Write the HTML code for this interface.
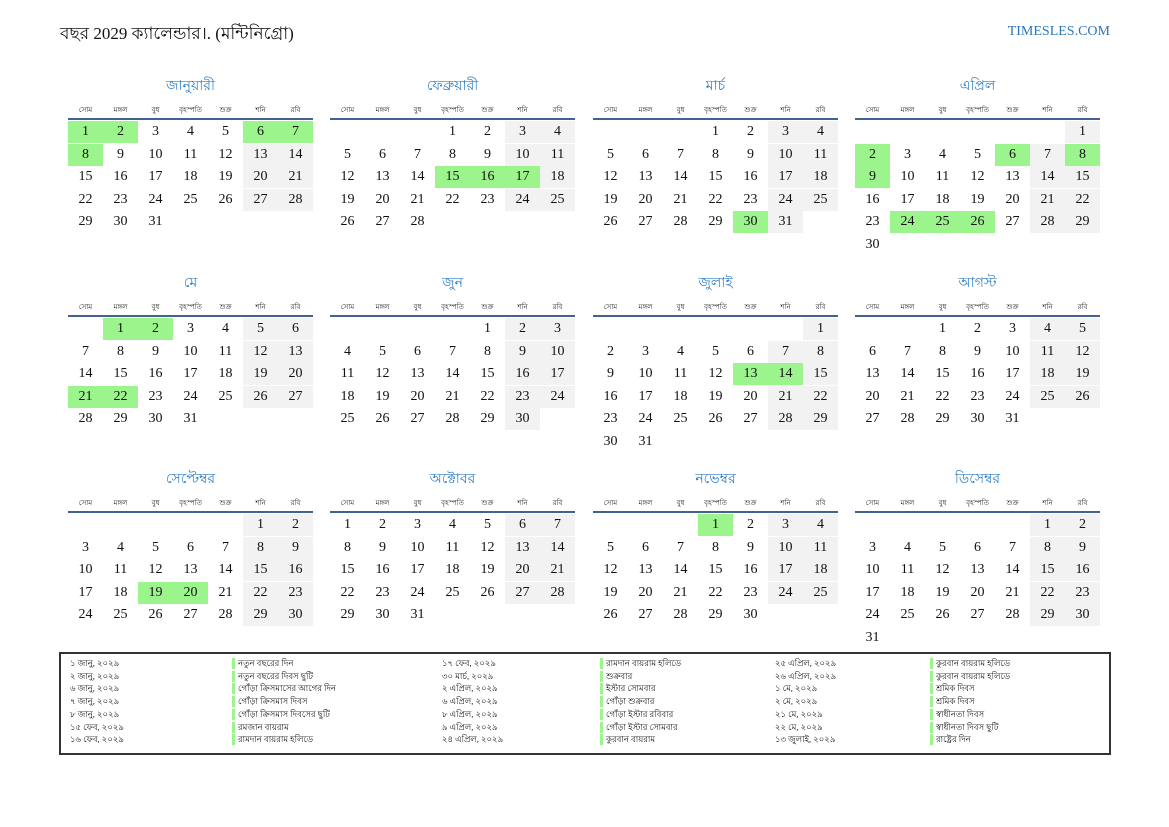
<!DOCTYPE html>
<html><head><meta charset="utf-8">
<style>
body{margin:0;width:1169px;height:827px;background:#fff;position:relative;overflow:hidden;font-family:"Liberation Serif",serif;color:#111}
.a{position:absolute}
.title{left:60px;top:21px;font-size:17px;white-space:nowrap}
.site{right:59px;top:24px;font-size:14px;color:#2a75bb}
.mt{font-size:14px;color:#2f7fc4;text-align:center;width:245px}
.dn{font-size:7px;text-align:center;width:35px;color:#222}
.ln{height:2px;background:#44628f;width:245px}
.c{width:35px;height:22px;line-height:22px;text-align:center;font-size:14px}
.g{background:#f2f2f2}.h{background:#9cf58c}
.box{left:59px;top:652px;width:1048px;height:99px;border:2px solid #333}
.lg{font-size:8.5px;white-space:nowrap;line-height:12.7px}
.bar{width:3px;height:11px;background:#9cf58c}
</style></head><body>
<div class="a title">বছর 2029 ক্যালেন্ডার।. (মন্টিনিগ্রো)</div>
<div class="a site">TIMESLES.COM</div>
<div class="a box"></div>
<div id="r"></div>
<script>
var names=["জানুয়ারী","ফেব্রুয়ারী","মার্চ","এপ্রিল","মে","জুন","জুলাই","আগস্ট","সেপ্টেম্বর","অক্টোবর","নভেম্বর","ডিসেম্বর"];
var start=[0,3,3,6,1,4,6,2,5,0,3,5],len=[31,28,31,30,31,30,31,31,30,31,30,31];
var dn=["সোম","মঙ্গল","বুধ","বৃহস্পতি","শুক্র","শনি","রবি"];
var hol={0:[1,2,6,7,8],1:[15,16,17],2:[30],3:[2,6,8,9,24,25,26],4:[1,2,21,22],6:[13,14],8:[19,20],10:[1]};
var xs=[68,330,593,855],ys=[72,269,465],h="";
for(var m=0;m<12;m++){var x=xs[m%4],y=ys[Math.floor(m/4)];
h+='<div class="a mt" style="left:'+x+'px;top:'+(y+2)+'px">'+names[m]+'</div>';
for(var i=0;i<7;i++)h+='<div class="a dn" style="left:'+(x+i*35)+'px;top:'+(y+32)+'px">'+dn[i]+'</div>';
h+='<div class="a ln" style="left:'+x+'px;top:'+(y+46)+'px"></div>';
for(var d=1;d<=len[m];d++){var p=start[m]+d-1,col=p%7,row=Math.floor(p/7);
var cl=(hol[m]&&hol[m].indexOf(d)>=0)?' h':(col>=5?' g':'');
h+='<div class="a c'+cl+'" style="left:'+(x+col*35)+'px;top:'+(y+49+row*22.6)+'px">'+d+'</div>';}}
var L=[["১ জানু, ২০২৯","নতুন বছরের দিন","১৭ ফেব, ২০২৯","রামদান বায়রাম হলিডে","২৫ এপ্রিল, ২০২৯","কুরবান বায়রাম হলিডে"],
["২ জানু, ২০২৯","নতুন বছরের দিবস ছুটি","৩০ মার্চ, ২০২৯","শুক্রবার","২৬ এপ্রিল, ২০২৯","কুরবান বায়রাম হলিডে"],
["৬ জানু, ২০২৯","গোঁড়া ক্রিসমাসের আগের দিন","২ এপ্রিল, ২০২৯","ইস্টার সোমবার","১ মে, ২০২৯","শ্রমিক দিবস"],
["৭ জানু, ২০২৯","গোঁড়া ক্রিসমাস দিবস","৬ এপ্রিল, ২০২৯","গোঁড়া শুক্রবার","২ মে, ২০২৯","শ্রমিক দিবস"],
["৮ জানু, ২০২৯","গোঁড়া ক্রিসমাস দিবসের ছুটি","৮ এপ্রিল, ২০২৯","গোঁড়া ইস্টার রবিবার","২১ মে, ২০২৯","স্বাধীনতা দিবস"],
["১৫ ফেব, ২০২৯","রমজান বায়রাম","৯ এপ্রিল, ২০২৯","গোঁড়া ইস্টার সোমবার","২২ মে, ২০২৯","স্বাধীনতা দিবস ছুটি"],
["১৬ ফেব, ২০২৯","রামদান বায়রাম হলিডে","২৪ এপ্রিল, ২০২৯","কুরবান বায়রাম","১৩ জুলাই, ২০২৯","রাষ্ট্রের দিন"]];
var lx=[70,238,442,606,775,936];
for(var r=0;r<7;r++)for(var k=0;k<6;k++){var ty=657+r*12.7;
if(k%2)h+='<div class="a bar" style="left:'+(lx[k]-6)+'px;top:'+(ty+1)+'px"></div>';
h+='<div class="a lg" style="left:'+lx[k]+'px;top:'+ty+'px">'+L[r][k]+'</div>';}
document.getElementById("r").innerHTML=h;
</script>
</body></html>
